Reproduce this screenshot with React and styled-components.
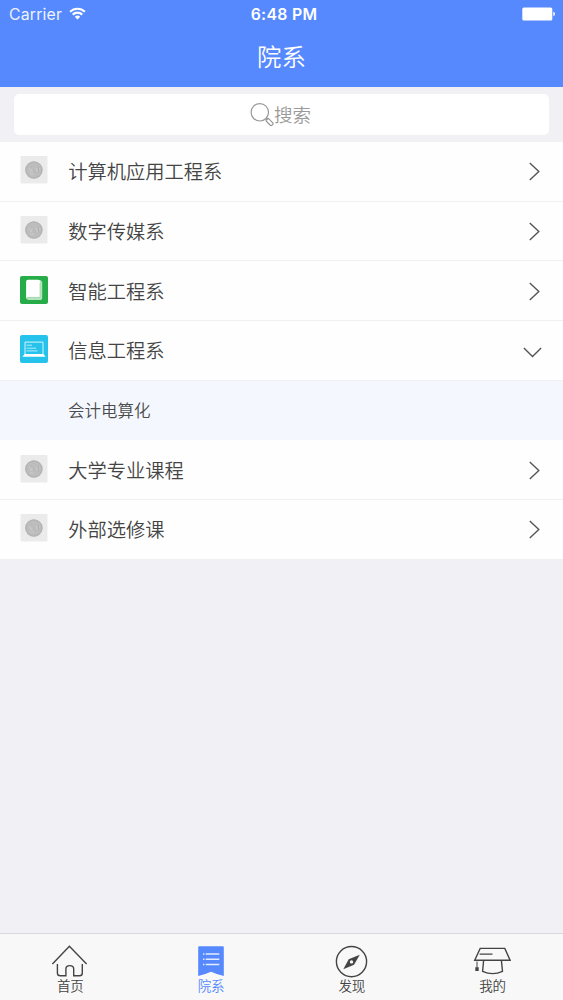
import React, { useState } from 'react';
import styled, { createGlobalStyle } from 'styled-components';

const departments = [
    { id: 1, name: '计算机应用工程系', icon: 'coin' },
    { id: 2, name: '数字传媒系', icon: 'coin' },
    { id: 3, name: '智能工程系', icon: 'book' },
    { id: 4, name: '信息工程系', icon: 'laptop', children: ['会计电算化'] },
    { id: 5, name: '大学专业课程', icon: 'coin' },
    { id: 6, name: '外部选修课', icon: 'coin' },
];

const tabs = [
    { id: 'home', label: '首页' },
    { id: 'departments', label: '院系' },
    { id: 'discover', label: '发现' },
    { id: 'mine', label: '我的' },
];

const WifiIcon = () => (
    <svg width="17" height="13" viewBox="0 0 18 14" fill="none" stroke="#fff" strokeWidth="2.3">
        <path d="M1 5.2a11.4 11.4 0 0 1 16 0" />
        <path d="M3.9 8.2a7.3 7.3 0 0 1 10.2 0" />
        <path d="M9 13.4L6.1 10.5a4.1 4.1 0 0 1 5.8 0z" fill="#fff" stroke="none" />
    </svg>
);

const BatteryIcon = () => (
    <svg width="34" height="14" viewBox="0 0 34 14" fill="#fff">
        <rect x="0.3" y="0.5" width="30" height="13" rx="1.6" />
        <path d="M31.3 4.8c2.2.6 2.2 3.8 0 4.4z" />
    </svg>
);

const SearchIcon = () => (
    <svg width="24" height="25" viewBox="0 0 24 25" fill="none" stroke="#999" strokeWidth="1.2">
        <circle cx="9.8" cy="10.3" r="8.7" />
        <path d="M16 16.5l1.5 1.5" />
        <rect x="15.6" y="18.3" width="8" height="3.5" rx="1.6" transform="rotate(46 19.6 20)" />
    </svg>
);

const CoinIcon = () => (
    <svg width="28" height="28" viewBox="0 0 28 28">
        <rect x="0.5" width="27" height="27.5" rx="1" fill="#ebebec" />
        <circle cx="13.9" cy="14" r="8.8" fill="#bdbdbe" />
        <circle cx="13.9" cy="14" r="8" fill="none" stroke="#b2b2b3" strokeWidth="1" />
        <path d="M9 12l2.5 4 1-5 2.5 5M16 12l1.5 4 2.5-4M10 18h4" fill="none" stroke="#cbcbcc" strokeWidth="1" />
        <path d="M11.5 10.5l4 6M18.5 11v6" fill="none" stroke="#adadae" strokeWidth="0.8" />
    </svg>
);

const BookIcon = () => (
    <svg width="28" height="28" viewBox="0 0 28 28">
        <rect width="28" height="28" rx="2" fill="#26ad49" />
        <path d="M8 4h11.500q2.700.3 2.700 3v14.500q0 2.600-2.600 2.600H9q-3-.2-3-3V6q0-2 2-2z" fill="#b5e3c0" />
        <path d="M8 3.800h10.300q1.700 0 1.700 1.700v15.600H9q-1.600 0-2.700 1V5.600q0-1.800 1.700-1.800z" fill="#fff" />
        <path d="M6.600 22.200q.8-.8 2.400-.8h11V7" fill="none" stroke="#8fd4a0" strokeWidth="0.6" />
    </svg>
);

const LaptopIcon = () => (
    <svg width="28" height="28" viewBox="0 0 28 28">
        <rect width="28" height="28" rx="2" fill="#25c2ec" />
        <path d="M5 19V7.1h18V19" fill="none" stroke="#d8f5fd" strokeWidth="1" />
        <path d="M6.5 10.2h5.5M6.5 13.2h9.5M6.5 15.9h11" stroke="#b5ecfa" strokeWidth="1" />
        <path d="M4.600 18.900h18.800l2.200 2.900H2.400z" fill="#fff" />
    </svg>
);

const rowIcons = { coin: CoinIcon, book: BookIcon, laptop: LaptopIcon };

const ChevronRight = () => (
    <svg width="11" height="19" viewBox="0 0 11 19" fill="none" stroke="#555" strokeWidth="1.4">
        <path d="M0.8 0.9l9 8.6-9 8.6" />
    </svg>
);

const ChevronDown = () => (
    <svg width="19" height="11" viewBox="0 0 19 11" fill="none" stroke="#555" strokeWidth="1.4">
        <path d="M0.9 0.9l8.6 8.7 8.6-8.7" />
    </svg>
);

const TabIcon = ({ id }) => (
    <svg width="36" height="32" viewBox="0 0 36 32" fill="none" stroke="#444" strokeWidth="1.4" overflow="visible">
        {id === 'home' && (
            <>
                <path d="M0.4 19L17.4 1.2 34.6 19" />
                <path d="M5.4 19v9q0 2.8 2.8 2.8h5.7V24q0-3.4 3.9-3.4t3.9 3.4v6.8h5.8q2.8 0 2.8-2.8v-9" />
            </>
        )}
        {id === 'departments' && (
            <>
                <path d="M6.2 1.3h23.6q1 0 1 1V31q-7.6-1.800-12.800-4.200Q12.900 29.200 5.200 31V2.300q0-1 1-1z" fill="#5689fe" stroke="none" />
                <path d="M12.7 9h13.6M12.7 14.3h13.6M12.7 19.5h13.6" stroke="#e4ecff" />
                <path d="M10 9h1.4M10 14.3h1.4M10 19.5h1.4" stroke="#e4ecff" />
            </>
        )}
        {id === 'discover' && (
            <>
                <circle cx="17.5" cy="16.6" r="15.1" />
                <path d="M25.8 9.8L20 19.7 9.3 24.3l5.4-10z" fill="#444" stroke="none" />
                <circle cx="17.5" cy="16.9" r="1.7" fill="#f8f8f8" stroke="none" />
            </>
        )}
        {id === 'mine' && (
            <>
                <path d="M5.2 3.4h24.6l5.3 11.9H-0.3zM4.6 9.1h12.9" />
                <path d="M8.6 15.5l-1 10.8q10 4.6 19.9 0l-1.1-10.8" />
                <path d="M2 16.5v6" strokeWidth="1" />
                <rect x="0.3" y="22.2" width="3.4" height="3.8" fill="#444" stroke="none" />
            </>
        )}
    </svg>
);

const App = () => {
    const [openId, setOpenId] = useState(4);
    const [activeTab, setActiveTab] = useState('departments');

    const handleToggle = (id) => {
        setOpenId(openId === id ? null : id);
    }

    return (
        <Screen>
            <GlobalStyle />
            <Header>
                <StatusBar>
                    <Carrier>Carrier <WifiIcon /></Carrier>
                    <Time>6:48 PM</Time>
                    <Battery><BatteryIcon /></Battery>
                </StatusBar>
                <Title>院系</Title>
            </Header>
            <SearchArea>
                <SearchBox><SearchIcon />搜索</SearchBox>
            </SearchArea>
            <List>
                {departments.map((e) => {
                    const Icon = rowIcons[e.icon];
                    const isOpen = e.children && openId === e.id;
                    return (
                        <React.Fragment key={e.id}>
                            <Row onClick={() => handleToggle(e.id)}>
                                <Icon />
                                <RowName>{e.name}</RowName>
                                <Arrow $open={isOpen}>
                                    {isOpen ? <ChevronDown /> : <ChevronRight />}
                                </Arrow>
                            </Row>
                            {isOpen && e.children.map((name) => (
                                <SubRow key={name}>{name}</SubRow>
                            ))}
                        </React.Fragment>
                    )
                })}
            </List>
            <TabBar>
                {tabs.map((t) => (
                    <Tab key={t.id} $active={t.id === activeTab} onClick={() => setActiveTab(t.id)}>
                        <TabIcon id={t.id} />
                        <span>{t.label}</span>
                    </Tab>
                ))}
            </TabBar>
        </Screen>
    )
}

export default App

const GlobalStyle = createGlobalStyle`
    * {
        box-sizing: border-box;
    }
    body {
        margin: 0;
        font-family: Inter, "Noto Sans CJK SC", sans-serif;
        font-weight: 350;
    }
    svg {
        display: block;
        flex-shrink: 0;
    }
`

const Screen = styled.div`
    display: flex;
    flex-direction: column;
    height: 1000px;
    width: 100%;
    background-color: #f0f0f5;
    overflow: hidden;
`

const Header = styled.header`
    height: 87px;
    flex-shrink: 0;
    background-color: #5689fe;
    color: white;
`

const StatusBar = styled.div`
    display: grid;
    grid-template-columns: 1fr auto 1fr;
    align-items: center;
    height: 28px;
    padding: 0 7px 0 9px;
    line-height: 20px;
`

const Carrier = styled.div`
    display: flex;
    align-items: center;
    gap: 7px;
    padding-top: 2px;
    font-size: 15.8px;
    font-weight: 400;
    letter-spacing: 0.2px;
    color: #eef3ff;

    svg {
        margin-top: -3px;
    }
`

const Time = styled.div`
    padding: 2px 0 0 3px;
    font-size: 15.8px;
    font-weight: 600;
    letter-spacing: 0.3px;
`

const Battery = styled.div`
    justify-self: end;
`

const Title = styled.h1`
    margin: 0;
    height: 58px;
    line-height: 58px;
    text-align: center;
    font-size: 24.4px;
    font-weight: 350;
`

const SearchArea = styled.div`
    height: 54px;
    flex-shrink: 0;
    padding: 7px 14px 6px;
`

const SearchBox = styled.div`
    display: flex;
    justify-content: center;
    align-items: center;
    height: 41px;
    padding: 0 2px 1px 0;
    border-radius: 5px;
    background-color: white;
    color: #999;
    font-size: 18.5px;
`

const List = styled.div`
    flex: 1;
    padding-top: 1px;
`

const Row = styled.div`
    display: flex;
    align-items: center;
    height: 59.7px;
    padding: 0 13px 2px 20.4px;
    border-bottom: 1px solid #f0f0f4;
    background-color: #fefefe;
`

const RowName = styled.span`
    flex: 1;
    margin-left: 19.8px;
    padding-top: 4px;
    color: #444;
    font-size: 19.25px;
    line-height: 28px;
`

const Arrow = styled.span`
    display: flex;
    justify-content: center;
    width: 32px;
    padding: ${props => props.$open ? '6px 3px 0 0' : '3px 0 0 0'};
`

const SubRow = styled.div`
    height: 59.7px;
    padding-left: 68px;
    background-color: #f4f8fe;
    color: #4c4c4c;
    font-size: 16.5px;
    line-height: 61px;
`

const TabBar = styled.nav`
    display: flex;
    height: 67px;
    flex-shrink: 0;
    border-top: 1px solid #d8d8df;
    background-color: #f8f8f8;
`

const Tab = styled.div`
    display: flex;
    flex-direction: column;
    align-items: center;
    flex: 1;
    padding-top: 11px;
    color: ${props => props.$active ? '#5689fe' : '#444'};
    font-size: 13.5px;

    span {
        line-height: 18px;
    }
`
